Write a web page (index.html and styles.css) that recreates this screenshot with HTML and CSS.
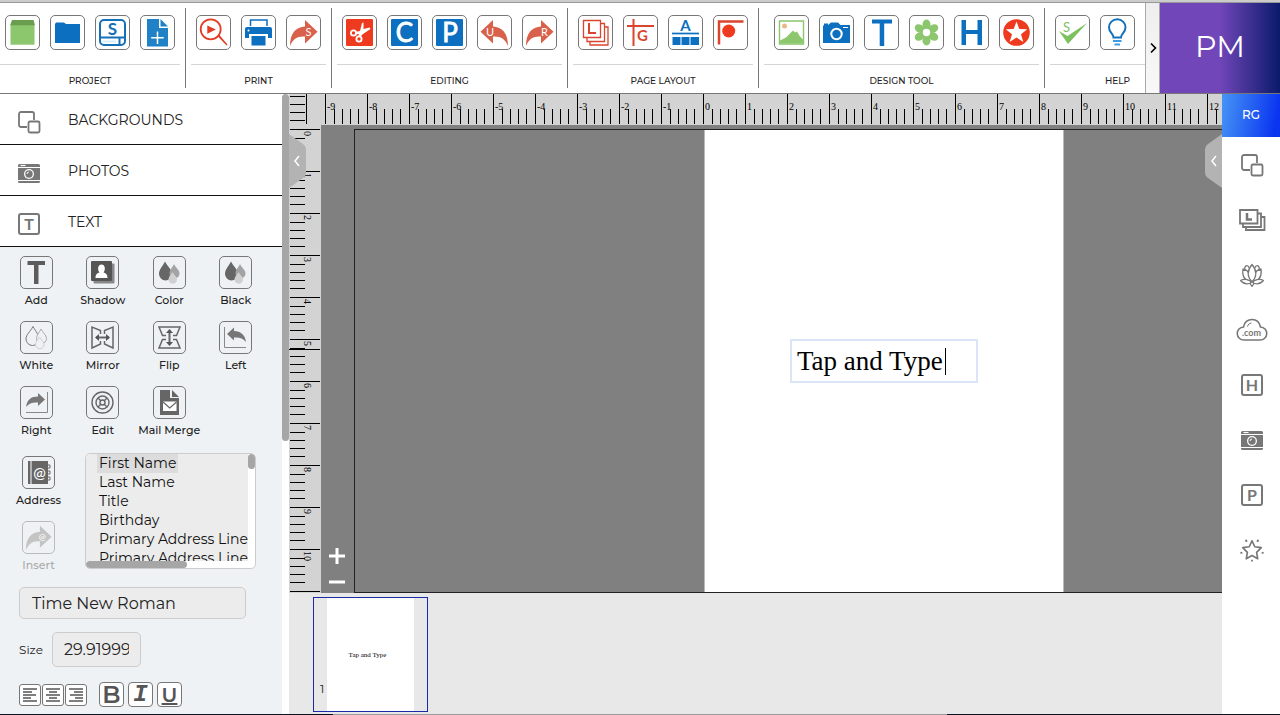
FILE: index.html
```html
<!DOCTYPE html>
<html lang="en">
<head>
  <meta charset="UTF-8">
  <title>Page Designer</title>
  <meta name="viewport" content="width=device-width, initial-scale=1.0">
  <link rel="stylesheet" href="styles.css">
</head>
<body>

  <!-- shapes used more than once -->
  <svg class="defs" aria-hidden="true">
    <symbol id="arrow-right" viewBox="0 0 33 33">
      <path d="M3 30C3 17 9 11 18 10.500V4L30.500 15.700 18 27.500V20.500C10 20 6 23 3 30z" fill="currentColor"/>
    </symbol>
    <symbol id="squares" viewBox="0 0 24 24">
      <g fill="none" stroke="currentColor" stroke-width="1.800">
        <path d="M10 17H4a2 2 0 0 1-2-2V4a2 2 0 0 1 2-2h11a2 2 0 0 1 2 2v6"/>
        <rect x="11.500" y="11.500" width="11" height="11" rx="1.500"/>
      </g>
    </symbol>
    <symbol id="camera" viewBox="0 0 24 24">
      <path d="M1 4.500a1.500 1.500 0 0 1 1.500-1.500h19A1.500 1.500 0 0 1 23 4.500V6H1zM1 7h22v12H1zM1 20h22v.500a1.500 1.500 0 0 1-1.500 1.500h-19A1.500 1.500 0 0 1 1 20.500z" fill="currentColor"/>
      <path d="M3.500 4.500h5" stroke="#fff" stroke-width="1.200"/>
      <circle cx="12" cy="13" r="5" fill="#fff"/>
      <circle cx="12" cy="13" r="3.700" fill="currentColor"/>
      <path d="M10 13a2 2 0 0 1 2-2" fill="none" stroke="#fff"/>
    </symbol>
    <symbol id="letter-box" viewBox="0 0 24 24">
      <rect x="2" y="2" width="20" height="20" rx="2" fill="none" stroke="currentColor" stroke-width="2"/>
    </symbol>
    <symbol id="drops" viewBox="0 0 31 31">
      <path d="M11 4.500C8 10 5 12.500 5 17a6.500 6.500 0 0 0 13 0C18 12.500 14 10 11 4.500z" fill="#666"/>
      <path d="M20 7c-2 4-4.500 6-4.500 9.500a5 5 0 0 0 10 0C25.500 13 22 11 20 7z" fill="#a3a3a3"/>
      <path d="M18.500 15c-1.500 3-4 4.500-4 7.500a4 4 0 0 0 8.500 0C23 19.500 20 18 18.500 15z" fill="#d0d0d0"/>
    </symbol>
  </svg>

  <header class="toolbar">
    <div class="groups">
      <section class="group">
        <div class="buttons">
          <button aria-label="New"><svg viewBox="0 0 33 33"><path d="M4.500 9h24v19.700h-24z" fill="#8cc66d"/><path d="M6 4h21.500l1.500 5.300H4z" fill="#6a9d50"/></svg></button>
          <button aria-label="Open"><svg viewBox="0 0 33 33"><path d="M4 27V8l1-1.500h8L15 8h14v19z" fill="#0c6fc0"/></svg></button>
          <button aria-label="Save"><svg viewBox="0 0 33 33"><g fill="none" stroke="#1471b8" stroke-width="2"><rect x="4" y="4" width="25" height="25" rx="4"/><path d="M4 21.500h25M23.500 21.500V29"/></g><path d="M7 25.500h13" stroke="#d6ecfa" stroke-width="2"/><text class="bold" x="16.500" y="18.500" font-size="17" fill="#1471b8">S</text></svg></button>
          <button aria-label="Add page"><svg viewBox="0 0 33 33"><path d="M6 3h12v9h9v18.500H6z" fill="#2181c6"/><path d="M19.500 3l7.500 7.500h-7.500z" fill="#2181c6"/><path d="M16.500 15.500v12.500M10.200 21.700h12.500" stroke="#fff" stroke-width="1.500"/></svg></button>
        </div>
        <h2>PROJECT</h2>
      </section>

      <section class="group">
        <div class="buttons">
          <button aria-label="Preview"><svg viewBox="0 0 33 33"><circle cx="13.700" cy="13.300" r="10" fill="none" stroke="#e23c23" stroke-width="1.800"/><path d="M10.300 9.500v8.300l8.500-4.200zM20.500 20l1.500-1.500 8.500 10-1 1z" fill="#e23c23"/></svg></button>
          <button aria-label="Print"><svg viewBox="0 0 33 33"><path d="M8.500 10V4h16.500v6" fill="none" stroke="#0c6fc0" stroke-width="1.500"/><path d="M5 11h23a2 2 0 0 1 2 2v9h-4v-4H7v4H3v-9a2 2 0 0 1 2-2zM9.500 20h14v9.500h-14z" fill="#0c6fc0"/><circle cx="6.500" cy="14.500" r="1" fill="#fff"/></svg></button>
          <button class="rust" aria-label="Share"><svg viewBox="0 0 33 33"><use href="#arrow-right"/><text x="21.500" y="19.500" font-size="11" fill="#fff">S</text></svg></button>
        </div>
        <h2>PRINT</h2>
      </section>

      <section class="group">
        <div class="buttons">
          <button aria-label="Cut"><svg viewBox="0 0 33 33"><rect x="3" y="3" width="27" height="27" rx="1" fill="#ee3a1e"/><g fill="none" stroke="#fff" stroke-width="1.800"><circle cx="10.500" cy="17" r="2.600"/><circle cx="16" cy="23" r="2.600"/></g><path d="M12 16l5-1 2-8 1.500-.500v6.500l6-1.500 1 1.500-7.500 5-3 3h-2l1-3-4 .500z" fill="#fff"/></svg></button>
          <button aria-label="Copy"><svg viewBox="0 0 33 33"><rect x="3" y="3" width="27" height="27" rx="1" fill="#0c6fc0"/><text class="thick" x="16.500" y="25.500" font-size="26">C</text></svg></button>
          <button aria-label="Paste"><svg viewBox="0 0 33 33"><rect x="3" y="3" width="27" height="27" rx="1" fill="#0c6fc0"/><text class="thick" x="17" y="25.500" font-size="26">P</text></svg></button>
          <button class="rust" aria-label="Undo"><svg viewBox="0 0 33 33"><use href="#arrow-right" transform="matrix(-1 0 0 1 33 0)"/><text x="12" y="19.500" font-size="11" fill="#fff">U</text></svg></button>
          <button class="rust" aria-label="Redo"><svg viewBox="0 0 33 33"><use href="#arrow-right"/><text x="21.500" y="19.500" font-size="11" fill="#fff">R</text></svg></button>
        </div>
        <h2>EDITING</h2>
      </section>

      <section class="group">
        <div class="buttons">
          <button aria-label="Layers"><svg viewBox="0 0 33 33"><g fill="#fff" stroke="#d9452f" stroke-width="1.300"><path d="M11 11h18v18H11z"/><path d="M8 7.500h17.500v18H8z"/><path d="M4.500 4.500h17v17h-17z"/></g><path d="M10 7v10h7" fill="none" stroke="#d9452f" stroke-width="2"/></svg></button>
          <button aria-label="Guides"><svg viewBox="0 0 33 33"><path d="M9.500 3v27M3 10h27" stroke="#d9452f" stroke-width="2"/><text class="bold" x="18.500" y="25" font-size="15" fill="#d9452f">G</text></svg></button>
          <button aria-label="Align objects"><svg viewBox="0 0 33 33"><text class="bold" x="16.500" y="14.500" font-size="15" fill="#0c6fc0">A</text><path d="M3 17.500h27" stroke="#0c6fc0" stroke-width="1.700"/><path d="M3.500 21h8v8h-8zM12.500 21h8v8h-8zM21.500 21h8.500v8h-8.500z" fill="#0c6fc0"/></svg></button>
          <button aria-label="Page corner"><svg viewBox="0 0 33 33"><path d="M5 28.500V5.500h24.500" fill="none" stroke="#d9452f" stroke-width="2.500"/><circle cx="14.700" cy="15" r="6.500" fill="#ee3a1e"/></svg></button>
        </div>
        <h2>PAGE LAYOUT</h2>
      </section>

      <section class="group wide">
        <div class="buttons">
          <button aria-label="Picture"><svg viewBox="0 0 33 33"><path d="M4.500 5h24v23h-24z" fill="none" stroke="#8cc66d" stroke-width="1.400"/><circle cx="9.500" cy="10" r="2.500" fill="#e9b98a"/><path d="M5 27.500v-3l6-3 4-4 3-3 2 2 2-1 3 5 3 3v4z" fill="#8cc66d"/></svg></button>
          <button aria-label="Camera"><svg viewBox="0 0 33 33"><path d="M3 10l1-1V7.500h4V9l3-2.500h7L20.500 9H30v18H3z" fill="#0c6fc0"/><circle cx="16.500" cy="18" r="5.200" fill="none" stroke="#fff" stroke-width="2"/><path d="M23 11.500h5" stroke="#fff"/></svg></button>
          <button aria-label="Text"><svg viewBox="0 0 33 33"><path d="M7 3.500h20v4h-7.800V30h-4.500V7.500H7z" fill="#0c6fc0"/></svg></button>
          <button aria-label="Flower"><svg viewBox="0 0 33 33"><g fill="#8cc66d"><ellipse cx="16.500" cy="8.500" rx="4" ry="5"/><ellipse cx="16.500" cy="24.500" rx="4" ry="5"/><ellipse cx="9.500" cy="12.500" rx="4" ry="5" transform="rotate(-60 9.500 12.500)"/><ellipse cx="23.500" cy="20.500" rx="4" ry="5" transform="rotate(-60 23.500 20.500)"/><ellipse cx="9.500" cy="20.500" rx="4" ry="5" transform="rotate(60 9.500 20.500)"/><ellipse cx="23.500" cy="12.500" rx="4" ry="5" transform="rotate(60 23.500 12.500)"/><circle cx="16.500" cy="16.500" r="6"/></g><circle cx="16.500" cy="16.500" r="3.700" fill="#fff"/></svg></button>
          <button aria-label="Heading"><svg viewBox="0 0 33 33"><path d="M6.500 4H11v10h11.500V4h4.500v25h-4.500V18H11v11H6.500z" fill="#0c6fc0"/></svg></button>
          <button aria-label="Star"><svg viewBox="0 0 33 33"><circle cx="16.500" cy="16.500" r="13.300" fill="#ee3a1e"/><path d="M16.500 5.500l2.800 7.500 8 .200-6.300 5 2.300 7.700-6.800-4.500-6.800 4.500 2.300-7.700-6.300-5 8-.200z" fill="#fff"/></svg></button>
        </div>
        <h2>DESIGN TOOL</h2>
      </section>

      <section class="group help">
        <div class="buttons">
          <button aria-label="Spell check"><svg viewBox="0 0 33 33"><path d="M3 15l8.500 5L31 7 12 28z" fill="#7cc15f"/><text x="10.500" y="16" font-size="13" fill="#7cc15f">S</text></svg></button>
          <button aria-label="Tips"><svg viewBox="0 0 33 33"><path d="M12.500 21.500c0-4-4.500-5-4.500-10a8 8 0 0 1 16.500 0c0 5-4.500 6-4.500 10z" fill="none" stroke="#1471b8" stroke-width="2"/><path d="M12 25h8.500M13.500 28.500h5.500" stroke="#3d9be0" stroke-width="1.800"/></svg></button>
        </div>
        <h2>HELP</h2>
      </section>
    </div>

    <button class="more" aria-label="More tools"><svg viewBox="0 0 14 14"><path d="M5 2.500L9.500 7 5 11.500" fill="none" stroke="#000" stroke-width="1.600"/></svg></button>
    <a class="account" href="#">PM</a>
  </header>

  <main class="main">
    <aside class="panel">
      <nav class="menu">
        <a href="#"><svg><use href="#squares"/></svg>BACKGROUNDS</a>
        <a href="#"><svg><use href="#camera"/></svg>PHOTOS</a>
        <a href="#"><svg viewBox="0 0 24 24"><use href="#letter-box"/><text class="bold" x="12" y="18" font-size="16" fill="currentColor">T</text></svg>TEXT</a>
      </nav>

      <div class="tools">
        <button class="tool"><svg viewBox="0 0 31 31"><path d="M6.500 4h17.500v4h-6.500v19h-4.500V8H6.500z" fill="#5c5c5c"/></svg>Add</button>
        <button class="tool"><svg viewBox="0 0 31 31"><rect x="6.500" y="6.500" width="21" height="20" rx="1" fill="#888"/><rect x="4" y="4" width="21" height="20" rx="1" fill="#555"/><path d="M8.500 21c0-4 2-5 4-5.500-2.500-3-1.500-8 2-8s4.500 5 2 8c2 .500 4 1.500 4 5.500z" fill="#fff"/></svg>Shadow</button>
        <button class="tool"><svg><use href="#drops"/></svg>Color</button>
        <button class="tool"><svg><use href="#drops"/></svg>Black</button>
        <button class="tool"><svg viewBox="0 0 31 31"><g fill="#eff2f5"><path d="M12 4.500C9 10 5 12.500 5 17a6.500 6.500 0 0 0 13 0C18 12.500 15 10 12 4.500z" stroke="#777"/><path d="M20 7c-2 4-4.500 6-4.500 9.500a5 5 0 0 0 10 0C25.500 13 22 11 20 7z" stroke="#aaa"/><path d="M18.500 15c-1.500 3-4 4.500-4 7.500a4 4 0 0 0 8.500 0C23 19.500 20 18 18.500 15z" stroke="#ccc"/></g></svg>White</button>
        <button class="tool"><svg viewBox="0 0 31 31"><g fill="none" stroke="#666" stroke-width="1.500"><path d="M13.500 12V8.500L5 5v21l8.500-4v-3M17.500 12V8.500L26 5v21l-8.500-4v-3"/><path d="M9 15.500h13" stroke-width="2"/></g><path d="M8 15.500l4-3.500v7zM23 15.500l-4-3.500v7z" fill="#555"/></svg>Mirror</button>
        <button class="tool"><svg viewBox="0 0 31 31"><g fill="none" stroke="#666" stroke-width="1.500"><path d="M12 13.500H8.500L5 5h21l-3.500 8.500H19M12 17.500H8.500L5 26h21l-3.500-8.500H19"/><path d="M15.500 9v13" stroke-width="2"/></g><path d="M15.500 7l-3.500 4h7zM15.500 24l-3.500-4h7z" fill="#555"/></svg>Flip</button>
        <button class="tool"><svg viewBox="0 0 31 31"><path d="M4.500 5v20.500H26" fill="none" stroke="#888"/><path d="M7 12l7-6.500V9c7 0 11 4 12 11-3-4-7-5-12-4.500v3z" fill="#777"/></svg>Left</button>
        <button class="tool"><svg viewBox="0 0 31 31"><path d="M26.500 5v20.500H5" fill="none" stroke="#888"/><path d="M24 12.500L17 6v3.500c-7 0-11 3-12 10.500 3-4 7-5 12-4.500V19z" fill="#777"/></svg>Right</button>
        <button class="tool"><svg viewBox="0 0 31 31"><g fill="none" stroke="#666" stroke-width="1.400"><circle cx="15.500" cy="15.500" r="10.500"/><circle cx="15.500" cy="15.500" r="6.500"/><circle cx="15.500" cy="15.500" r="2.500"/><path d="M11 11l3 3M20 11l-3 3M11 20l3-3M20 20l-3-3"/></g></svg>Edit</button>
        <button class="tool"><svg viewBox="0 0 31 31"><path d="M6 3h10v8h9v17H6z" fill="#666"/><path d="M18 3l7 7h-7z" fill="#666"/><path d="M9 14.500h13.500v9.500H9z" fill="#fff"/><path d="M9 15l6.800 6 6.700-6" fill="none" stroke="#666" stroke-width="1.200"/></svg>Mail Merge</button>
      </div>

      <div class="merge">
        <div class="merge-buttons">
          <button class="tool"><svg viewBox="0 0 31 31"><path d="M5 4h20v23H5z" fill="#666"/><path d="M8 4v23" stroke="#fff"/><path d="M24 8h3v3h-3M24 14h3v3h-3M24 20h3v3h-3" fill="none" stroke="#666"/><text x="16.500" y="20.500" font-size="15" fill="#fff">@</text></svg>Address</button>
          <button class="tool" disabled><svg viewBox="0 0 33 33"><use href="#arrow-right"/><text x="20.500" y="19" font-size="9" fill="#fff">@</text></svg>Insert</button>
        </div>
        <div class="field-list">
          <select size="6" aria-label="Merge fields">
            <option selected>First Name</option>
            <option>Last Name</option>
            <option>Title</option>
            <option>Birthday</option>
            <option>Primary Address Line 1</option>
            <option>Primary Address Line 2</option>
          </select>
          <div class="bar-v"><div></div></div>
          <div class="bar-h"><div></div></div>
        </div>
      </div>

      <select class="font" aria-label="Font">
        <option>Time New Roman</option>
      </select>

      <div class="size">
        <label for="size">Size</label>
        <input id="size" type="text" value="29.919999">
      </div>

      <div class="format">
        <button class="align" aria-label="Align left"><svg viewBox="0 0 20 20"><path d="M3 4h14M3 7h9M3 10h13M3 13h8M3 16h14" /></svg></button>
        <button class="align" aria-label="Align center"><svg viewBox="0 0 20 20"><path d="M3 4h14M6 7h8M3 10h14M6 13h8M3 16h14"/></svg></button>
        <button class="align" aria-label="Align right"><svg viewBox="0 0 20 20"><path d="M3 4h14M8 7h9M4 10h13M9 13h8M3 16h14"/></svg></button>
        <button class="style b">B</button>
        <button class="style i">I</button>
        <button class="style u">U</button>
      </div>
    </aside>
    <div class="panel-scroll"><div></div></div>

    <div class="workspace">
      <div class="ruler-v">
        <span></span><span>0</span><span>1</span><span>2</span><span>3</span><span>4</span><span>5</span><span>6</span><span>7</span><span>8</span><span>9</span><span>10</span><span></span>
        <i class="marker"></i>
      </div>
      <div class="ruler-h">
        <span>-9</span><span>-8</span><span>-7</span><span>-6</span><span>-5</span><span>-4</span><span>-3</span><span>-2</span><span>-1</span><span>0</span><span>1</span><span>2</span><span>3</span><span>4</span><span>5</span><span>6</span><span>7</span><span>8</span><span>9</span><span>10</span><span>11</span><span>12</span>
      </div>
      <div class="canvas">
        <div class="zoom">
          <button aria-label="Zoom in"><svg viewBox="0 0 16 16"><path d="M8 0v16M0 8h16"/></svg></button>
          <button aria-label="Zoom out"><svg viewBox="0 0 16 16"><path d="M0 8h16"/></svg></button>
        </div>
        <div class="board">
          <div class="page">
            <div class="text-box"><input type="text" value="Tap and Type" aria-label="Text"><span class="caret"></span></div>
          </div>
        </div>
      </div>
      <div class="pages">
        <a class="thumb" href="#">
          <span class="number">1</span>
          <span class="sheet">Tap and Type</span>
        </a>
      </div>
      <button class="handle left" aria-label="Hide left panel"><svg viewBox="0 0 17 54"><path d="M0 0l14 10q3 2 3 5v24q0 3-3 5L0 54z" fill="#b3b3b3"/><path d="M10 22l-4 5 4 5" fill="none" stroke="#fff" stroke-width="1.500"/></svg></button>
      <button class="handle right" aria-label="Show right panel"><svg viewBox="0 0 17 54"><path d="M17 0L3 10q-3 2-3 5v24q0 3 3 5l14 10z" fill="#b3b3b3"/><path d="M11 22l-4 5 4 5" fill="none" stroke="#fff" stroke-width="1.500"/></svg></button>
    </div>

    <nav class="rail">
      <a class="user" href="#">RG</a>
      <a href="#" aria-label="Backgrounds"><svg><use href="#squares"/></svg></a>
      <a href="#" aria-label="Layouts"><svg class="big" viewBox="0 0 28 24"><g fill="#fff" stroke="currentColor" stroke-width="1.800"><path d="M8 9h18.500v13H8z"/><path d="M5 5.500h18V19H5z"/><path d="M2 2h17.500v13.500H2z"/></g><path d="M9 5v6.500h5" fill="none" stroke="currentColor" stroke-width="2.500"/></svg></a>
      <a href="#" aria-label="Clip art"><svg class="big" viewBox="0 0 28 24"><g fill="#fff" stroke="currentColor" stroke-width="1.300" stroke-linejoin="round"><path d="M7 7C6 4 8 2 10 3l2 3M21 7c1-3-1-5-3-4l-2 3"/><path d="M5 6c5 1 9 6 9 13C7 18 4 13 5 6zM23 6c-5 1-9 6-9 13 7-1 10-6 9-13z"/><path d="M14 1.500c5 6 5 12 0 17.500-5-5.500-5-11.500 0-17.500z"/><path d="M2.500 17.500c4-2 9-1 11.500 2-4 2-8 2-11.500-2zM25.500 17.500c-4-2-9-1-11.500 2 4 2 8 2 11.500-2z"/><path d="M14 18.500l2 2-2 3-2-3z"/></g></svg></a>
      <a href="#" aria-label="Web images"><svg class="cloud" viewBox="0 0 32 24"><path d="M8 22a6.500 6.500 0 0 1-.500-13C8 4 12 1.500 16 1.500S23.500 4 24.500 9A6.500 6.500 0 0 1 24 22z" fill="#fff" stroke="currentColor" stroke-width="1.600"/><path d="M11.500 8.500c.500-2 2-3.500 4-3.500" fill="none" stroke="currentColor"/><text class="bold" x="15.500" y="17.500" font-size="9" fill="currentColor">.com</text></svg></a>
      <a href="#" aria-label="Headings"><svg viewBox="0 0 24 24"><use href="#letter-box"/><text class="bold" x="12" y="18" font-size="16" fill="currentColor">H</text></svg></a>
      <a href="#" aria-label="Photos"><svg><use href="#camera"/></svg></a>
      <a href="#" aria-label="Patterns"><svg viewBox="0 0 24 24"><use href="#letter-box"/><text class="bold" x="12" y="18" font-size="16" fill="currentColor">P</text></svg></a>
      <a href="#" aria-label="Effects"><svg class="big" viewBox="0 0 28 26"><path d="M14 3l3 6.500 7 1-5 5 1.200 7-6.200-3.500-6.200 3.500 1.200-7-5-5 7-1z" fill="none" stroke="currentColor" stroke-width="1.800" stroke-linejoin="round"/><path d="M7 2l1.500 2M21 2l-1.500 2M1.500 16.500l2-.800M26.500 16.500l-2-.800M14 23.500v2" stroke="currentColor" stroke-width="2"/></svg></a>
    </nav>
  </main>

  <footer class="edge"></footer>

</body>
</html>
```
FILE: styles.css
```css
* {
  box-sizing: border-box;
}

body {
  margin: 0;
  height: 100vh;
  display: flex;
  flex-direction: column;
  overflow: hidden;
  font-family: Montserrat, Inter, sans-serif;
  color: #222;
  background: #fff;
  border-top: 2px solid #ccc;
}

a {
  color: inherit;
  text-decoration: none;
}

button {
  padding: 0;
  border: none;
  background: none;
  font-family: inherit;
  color: inherit;
  cursor: pointer;
}

svg {
  display: block;
}

svg text {
  font-family: Lato, sans-serif;
  text-anchor: middle;
}

svg .bold {
  font-weight: bold;
}

svg .thick {
  fill: #fff;
  stroke: #fff;
  stroke-width: 0.8;
}

.defs {
  display: none;
}

/* top toolbar */
.toolbar {
  display: flex;
  flex: none;
  height: 92px;
  border-top: 1px solid #999;
  border-bottom: 1px solid #777;
}

.groups {
  display: flex;
  flex: 1;
  min-width: 0;
  overflow: hidden;
  padding: 5px 0;
}

.group {
  flex: none;
  padding-right: 5px;
  margin-right: 5px;
  border-right: 1px solid #777;
}

.group.wide .buttons {
  padding-left: 10px;
}

.group.help {
  width: 135px;
  margin: 0;
  padding: 0;
  border: none;
}

.buttons {
  display: flex;
  gap: 10px;
  padding: 7px 5px 14px;
  border-bottom: 1px solid #d5d5d5;
}

.buttons button {
  width: 35px;
  height: 35px;
  border: 1px solid #777;
  border-radius: 5px;
  background: #fff;
}

.buttons svg {
  width: 33px;
  height: 33px;
}

.rust {
  color: #d9604a;
}

.group h2 {
  margin: 0;
  font-size: 9px;
  font-weight: 500;
  line-height: 32px;
  text-align: center;
}

.more {
  width: 15px;
  border: 1px solid #aaa;
  border-width: 0 1px;
  background: linear-gradient(#eee, #f8f8f8);
}

.more svg {
  width: 14px;
  height: 14px;
}

.account {
  width: 120px;
  line-height: 88px;
  font-size: 30px;
  text-align: center;
  color: #fff;
  background: linear-gradient(90deg, #7146b8 50%, #0a1a6b);
}

/* left panel */
.main {
  display: flex;
  flex: 1;
  min-height: 0;
}

.panel {
  flex: none;
  width: 282px;
  overflow: hidden;
  background: #eff2f5;
}

.panel-scroll {
  flex: none;
  width: 7px;
}

.panel-scroll div {
  height: 56%;
  border-radius: 4px;
  background: #a6a6a6;
}

.menu a {
  display: flex;
  align-items: center;
  gap: 27px;
  height: 51px;
  padding: 2px 0 0 17px;
  font-size: 14px;
  background: #fff;
  border-bottom: 1px solid #111;
}

.menu svg {
  width: 24px;
  height: 24px;
  color: #777;
  margin-top: 3px;
}

.tools {
  display: grid;
  grid-template-columns: repeat(4, 1fr);
  padding: 9px 13px 0 3px;
}

.tool {
  display: flex;
  flex-direction: column;
  align-items: center;
  gap: 3px;
  height: 65px;
  font-size: 11px;
  font-weight: 500;
  line-height: 16px;
  white-space: nowrap;
}

.tool svg {
  width: 33px;
  height: 33px;
  border: 1px solid #777;
  border-radius: 5px;
}

.tool:disabled {
  color: #aaa;
}

.tool:disabled svg {
  border-color: #bbb;
  color: #c4c4c4;
}

.merge {
  display: flex;
  gap: 14px;
  padding: 2px 0 0 6px;
}

.merge-buttons {
  width: 65px;
  padding-top: 3px;
}

.merge-buttons .tool {
  width: 100%;
}

.field-list {
  display: grid;
  grid-template-columns: 1fr 7px;
  grid-template-rows: 1fr 7px;
  width: 171px;
  height: 116px;
  border: 1px solid #ccc;
  border-radius: 5px;
  background: #fff;
  overflow: hidden;
}

.field-list select {
  appearance: none;
  min-width: 0;
  width: 100%;
  height: 107px;
  padding: 0 0 0 11px;
  border: none;
  border-radius: 0;
  outline: none;
  background: #ececec;
  font-family: inherit;
  font-size: 14px;
  overflow: hidden;
}

.field-list option {
  width: fit-content;
  height: 19px;
  min-height: 19px;
  padding: 0 2px;
  line-height: 19px;
  color: #111;
}

.field-list option:checked {
  background: linear-gradient(#dcdcdc, #dcdcdc);
}

.bar-h {
  grid-column: span 2;
}

.bar-v div,
.bar-h div {
  border-radius: 4px;
  background: #a6a6a6;
}

.bar-v div {
  height: 15px;
}

.bar-h div {
  width: 60%;
  height: 100%;
}

.font,
.size input {
  appearance: none;
  border: 1px solid #ccc;
  border-radius: 5px;
  background: #ececec;
  font-family: inherit;
  font-size: 16px;
  color: #222;
}

.font {
  display: block;
  width: 227px;
  height: 32px;
  margin: 1px 0 0 19px;
  padding: 0 12px;
}

.size {
  display: flex;
  align-items: center;
  gap: 9px;
  margin: 13px 0 0 19px;
  font-size: 12px;
}

.size input {
  width: 89px;
  height: 35px;
  padding: 0 11px;
}

.format {
  display: flex;
  align-items: center;
  gap: 1px;
  padding: 15px 0 0 19px;
}

.align {
  width: 22px;
  height: 22px;
  border: 1px solid #777;
  border-radius: 3px;
  background: #fff;
}

.align svg {
  width: 20px;
  height: 20px;
  fill: none;
  stroke: #555;
  stroke-width: 1.5;
}

.style {
  width: 25px;
  height: 25px;
  margin-right: 3px;
  border: 1px solid #777;
  border-radius: 4px;
  background: #fff;
  font-size: 24px;
  font-weight: 600;
  line-height: 22px;
  color: #555;
}

.style.b {
  margin-left: 11px;
}

.style.i {
  font-family: "Liberation Mono", monospace;
  font-style: italic;
  font-weight: bold;
}

.style.u {
  font-size: 20px;
  text-decoration: underline;
}

/* rulers and canvas */
.workspace {
  position: relative;
  flex: 1;
  min-width: 0;
  display: grid;
  grid-template-columns: 32px 1fr;
  grid-template-rows: 31px 1fr 121px;
  font-family: "Liberation Serif", serif;
}

.ruler-v,
.ruler-h {
  overflow: hidden;
  background: #d3d3d3;
  font-size: 10px;
  line-height: 10px;
  color: #000;
}

.ruler-h {
  display: flex;
  padding-left: 4px;
}

.ruler-h span {
  flex: none;
  width: 42px;
  height: 30px;
  padding: 8px 0 0 1px;
  border-left: 1px solid #000;
  background:
    linear-gradient(#000, #000) 8px 100% / 1px 15px no-repeat,
    linear-gradient(#000, #000) 16px 100% / 1px 15px no-repeat,
    linear-gradient(#000, #000) 24px 100% / 1px 15px no-repeat,
    linear-gradient(#000, #000) 32px 100% / 1px 15px no-repeat;
}

.ruler-v {
  position: relative;
  grid-row: 1 / 3;
  padding-left: 1px;
}

.ruler-v span {
  display: block;
  width: 30px;
  height: 42px;
  padding: 1px 8px 0 0;
  writing-mode: vertical-rl;
  border-top: 1px solid #000;
  background:
    linear-gradient(#000, #000) 0 8px / 15px 1px no-repeat,
    linear-gradient(#000, #000) 0 16px / 15px 1px no-repeat,
    linear-gradient(#000, #000) 0 24px / 15px 1px no-repeat,
    linear-gradient(#000, #000) 0 32px / 15px 1px no-repeat;
}

/* the part above zero */
.ruler-v span:first-child {
  height: 35px;
  border-top: none;
  background:
    linear-gradient(#000, #000) 16px 0 / 1px 30px no-repeat,
    linear-gradient(#000, #000) 0 2px / 15px 1px no-repeat,
    linear-gradient(#000, #000) 0 10px / 15px 1px no-repeat,
    linear-gradient(#000, #000) 0 18px / 15px 1px no-repeat,
    linear-gradient(#000, #000) 0 26px / 15px 1px no-repeat;
}

.marker {
  position: absolute;
  left: 0;
  top: 255px;
  width: 31px;
  height: 1px;
  background: #000;
}

.canvas {
  display: flex;
  min-width: 0;
  padding-top: 4px;
  background: #808080;
}

.zoom {
  display: flex;
  flex-direction: column;
  justify-content: flex-end;
  gap: 10px;
  width: 33px;
  padding: 0 0 3px 8px;
}

.zoom svg {
  width: 16px;
  height: 16px;
  stroke: #fff;
  stroke-width: 3;
}

.board {
  flex: 1;
  min-width: 0;
  border: 1px solid #222;
  border-right: none;
}

.page {
  position: relative;
  width: 360px;
  height: 100%;
  margin-left: 349px;
  background: #fff;
  border: 1px solid #bbb;
  border-width: 0 1px;
}

.text-box {
  position: absolute;
  left: 85px;
  top: 209px;
  display: flex;
  align-items: center;
  width: 188px;
  height: 44px;
  padding-left: 5px;
  border: 2px solid #dbe5f8;
}

.text-box input {
  width: 148px;
  padding: 0;
  border: none;
  outline: none;
  font-family: inherit;
  font-size: 27px;
  color: #000;
}

.caret {
  width: 1px;
  height: 27px;
  background: #000;
}

.pages {
  grid-column: span 2;
  padding: 4px 24px;
  background: #e8e8e8;
}

.thumb {
  display: flex;
  width: 115px;
  height: 115px;
  border: 1px solid #1b2ba8;
}

.number {
  align-self: flex-end;
  width: 13px;
  padding: 0 0 15px 6px;
  font-family: Montserrat, Inter, sans-serif;
  font-size: 12px;
}

.sheet {
  width: 87px;
  padding-right: 6px;
  font-size: 7px;
  line-height: 115px;
  text-align: center;
  color: #000;
  background: #fff;
}

.handle {
  position: absolute;
  top: 40px;
  width: 17px;
  height: 54px;
}

.handle.left {
  left: 0;
}

.handle.right {
  right: 0;
}

/* right icon rail */
.rail {
  flex: none;
  width: 58px;
  background: #fff;
}

.rail a {
  display: flex;
  align-items: center;
  justify-content: center;
  height: 55px;
  padding-left: 2px;
  color: #777;
}

.rail .user {
  height: 43px;
  padding: 0 0 3px;
  font-size: 12px;
  font-weight: 500;
  color: #fff;
  background: linear-gradient(100deg, #4795f5, #0a35f0 90%);
}

.rail svg {
  width: 24px;
  height: 24px;
}

.rail .big {
  width: 28px;
}

.rail .cloud {
  width: 32px;
}

.edge {
  flex: none;
  height: 1px;
  background: linear-gradient(90deg, #0b1220 26%, #999 26%, #999 74%, #0b1220 74%);
}
```
